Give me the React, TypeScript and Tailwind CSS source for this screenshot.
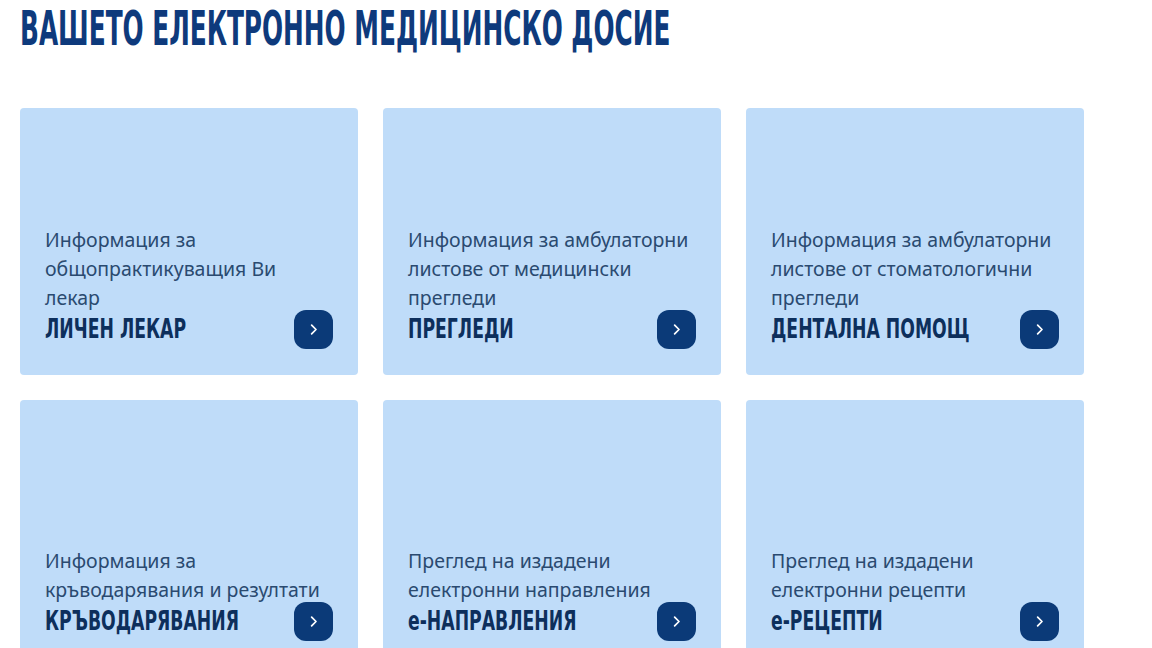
import React from 'react';

const cards = [
  { lines: ['Информация за', 'общопрактикуващия Ви', 'лекар'], title: 'ЛИЧЕН ЛЕКАР' },
  { lines: ['Информация за амбулаторни', 'листове от медицински', 'прегледи'], title: 'ПРЕГЛЕДИ' },
  { lines: ['Информация за амбулаторни', 'листове от стоматологични', 'прегледи'], title: 'ДЕНТАЛНА ПОМОЩ' },
  { lines: ['Информация за', 'кръводарявания и резултати'], title: 'КРЪВОДАРЯВАНИЯ' },
  { lines: ['Преглед на издадени', 'електронни направления'], title: 'е-НАПРАВЛЕНИЯ' },
  { lines: ['Преглед на издадени', 'електронни рецепти'], title: 'е-РЕЦЕПТИ' },
];

const condensed = { fontFamily: '"DejaVu Sans Condensed", "DejaVu Sans", sans-serif' };

const Card = ({ lines, title }: { lines: string[]; title: string }) => (
  <div className="h-[267px] rounded bg-[#bfdcf9] px-[25px] pb-[26px] flex flex-col justify-end">
    <p className="text-[19.5px] leading-[29px] text-[#2a4a70] whitespace-nowrap" style={{ fontFamily: '"Noto Sans", sans-serif' }}>
      {lines.map((l) => (
        <span key={l} className="block">
          {l}
        </span>
      ))}
    </p>
    <div className="flex items-center mt-[-3px] h-[40px]">
      <div className="flex-1 min-w-0">
        <span
          className="inline-block text-[27px] leading-none font-bold text-[#0d2f5c] whitespace-nowrap origin-left scale-x-[0.71]"
          style={condensed}
        >
          {title}
        </span>
      </div>
      <button
        type="button"
        className="w-[39px] h-[39px] rounded-xl bg-[#0b3a78] flex items-center justify-center text-white shrink-0"
        aria-label={title}
      >
        <svg width="15" height="15" viewBox="0 0 24 24" fill="none" stroke="currentColor" strokeWidth={2.8} strokeLinecap="round" strokeLinejoin="round">
          <path d="M9 5l7 7-7 7" />
        </svg>
      </button>
    </div>
  </div>
);

export default function App() {
  return (
    <div lang="bg" className="w-[1152px] h-[648px] overflow-hidden bg-white px-[20px] pt-[3px]">
      <div className="h-[53px]">
        <h1
          className="inline-block text-[48px] leading-[50px] font-bold text-[#0e3a7c] whitespace-nowrap origin-left scale-x-[0.574]"
          style={condensed}
        >
          ВАШЕТО ЕЛЕКТРОННО МЕДИЦИНСКО ДОСИЕ
        </h1>
      </div>
      <div className="grid grid-cols-[338px_338px_338px] gap-[25px] mt-[52px]">
        {cards.map((c) => (
          <Card key={c.title} {...c} />
        ))}
      </div>
    </div>
  );
}
